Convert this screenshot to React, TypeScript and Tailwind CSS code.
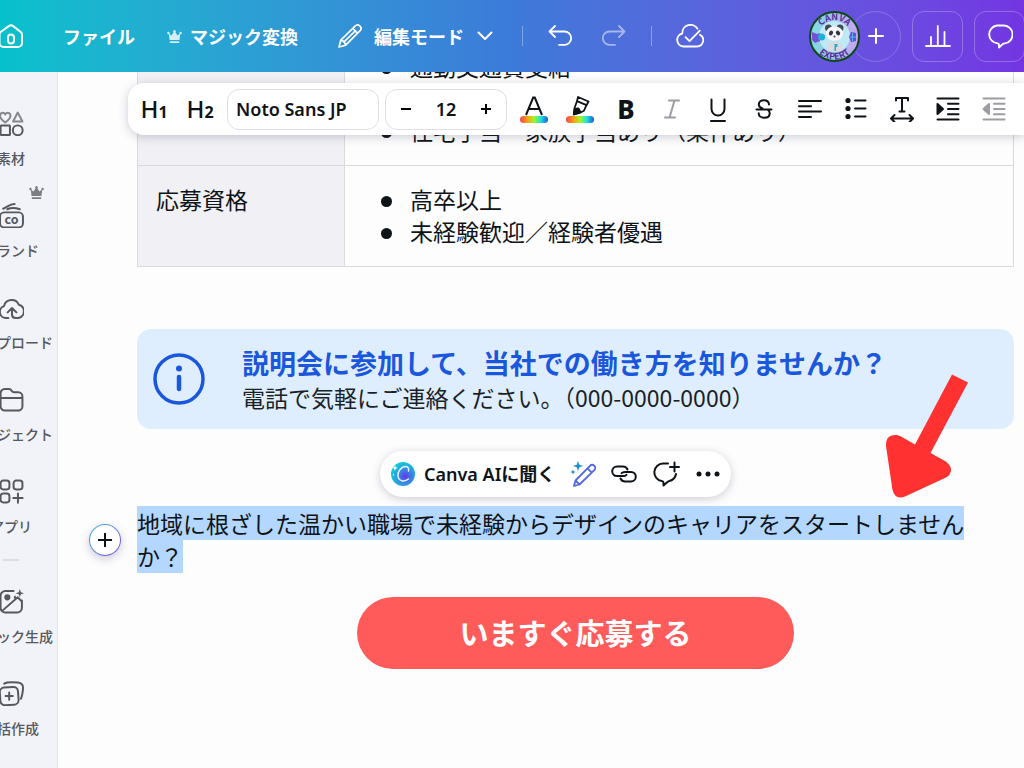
import type { ReactNode } from 'react';

type IconProps = { className?: string };

const Crown = ({ className }: IconProps) => (
  <svg viewBox="0 0 16 16" className={className} fill="currentColor" aria-hidden="true">
    <path d="M1.8 4.6l3 2.2L7.4 3h1.2l2.6 3.8 3-2.2-.9 7.2H2.7z" />
    <circle cx="1.5" cy="4.2" r="1.3" />
    <circle cx="8" cy="2.4" r="1.3" />
    <circle cx="14.5" cy="4.2" r="1.3" />
    <rect x="2.9" y="13" width="10.2" height="1.8" rx=".5" />
  </svg>
);

const Avatar = () => (
  <svg viewBox="0 0 51 51" className="h-[51px] w-[51px]" role="img" aria-label="Canva Expert">
    <defs>
      <linearGradient id="ring" x1="0" x2="1">
        <stop offset="0" stopColor="#7fdbe4" />
        <stop offset="1" stopColor="#c9a4ee" />
      </linearGradient>
      <path id="arcTop" d="M9 25.500a16.500 16.500 0 0 1 33 0" />
      <path id="arcBottom" d="M2.500 25.500a23 23 0 0 0 46 0" />
    </defs>
    <circle cx="25.5" cy="25.5" r="24.5" fill="url(#ring)" stroke="#0b4a17" strokeWidth="2" />
    <circle cx="25.5" cy="25.5" r="15.5" fill="#bfeaf5" />
    <path d="M3 21l5 2 3-1v8l-5 2-3-3z" fill="#7450d8" />
    <circle cx="12.5" cy="26" r="3.6" fill="#21aedb" />
    <path d="M42 21l5 1v8l-5 1-2-5z" fill="#6350d8" />
    <path d="M43.5 22v8M41 26h6" stroke="#52b9ef" />
    <text fontSize="9" fontWeight="700" fill="#56329c" textAnchor="middle">
      <textPath href="#arcTop" startOffset="50%">CANVA</textPath>
    </text>
    <text fontSize="9" fontWeight="700" fill="#56329c" textAnchor="middle">
      <textPath href="#arcBottom" startOffset="50%">EXPERT</textPath>
    </text>
    <path d="M18 40c-.5-7 2-10 7.500-10s8 3 7.500 10z" fill="#d9dbe0" />
    <circle cx="19.500" cy="17" r="3.500" fill="#454953" />
    <circle cx="31" cy="17" r="3.500" fill="#454953" />
    <ellipse cx="25.500" cy="22.500" rx="8.500" ry="7.300" fill="#f6f6f8" />
    <ellipse cx="22" cy="22" rx="2" ry="2.600" fill="#33373f" transform="rotate(25 22 22)" />
    <ellipse cx="29" cy="22" rx="2" ry="2.600" fill="#33373f" transform="rotate(-25 29 22)" />
    <circle cx="25.500" cy="25.500" r="1" fill="#33373f" />
    <path d="M25.500 33h3v3h-1.500v4h-1.500z" fill="#19b3c4" />
  </svg>
);

const Header = () => (
  <header className="relative z-20 flex h-[72px] shrink-0 items-center bg-linear-to-r from-[#05c1cc] via-[#3c7ad9] to-[#7335e2] text-lg font-bold text-white">
    <button aria-label="ホーム" className="w-[23px] shrink-0">
      <svg viewBox="0 0 23 24" className="h-6 w-[23px]" fill="none" stroke="currentColor" strokeWidth="2" strokeLinejoin="round">
        <path d="M-.5 10.500c0-1.200.5-2 1.500-2.800l7.800-5.600c1.400-1 3-1 4.400 0L20.800 8c.9.700 1.200 1.500 1.200 2.600V19a4 4 0 0 1-4 4H3.500a4 4 0 0 1-4-4z" />
        <rect x="8" y="10.500" width="6" height="9" rx="3" />
      </svg>
    </button>
    <button className="ml-10 shrink-0">ファイル</button>
    <button className="ml-8 flex shrink-0 items-center gap-2">
      <Crown className="h-[15px] w-[15px] opacity-80" />
      マジック変換
    </button>
    <button className="ml-10 flex shrink-0 items-center gap-3">
      <svg viewBox="0 0 24 24" className="h-6 w-6" fill="none" stroke="currentColor" strokeWidth="1.700" strokeLinejoin="round">
        <path d="M1 23l1.800-6.800L17.300 1.900a3.400 3.400 0 0 1 4.800 4.800L7.700 21.200z" />
        <path d="M14.800 4.500l4.800 4.800M2.800 16.200c2.200.4 4.300 2.500 4.900 5M18 6.200L5.300 18.700" />
      </svg>
      編集モード
      <svg viewBox="0 0 18 18" className="h-[18px] w-[18px]" fill="none" stroke="currentColor" strokeWidth="2" strokeLinecap="round" strokeLinejoin="round">
        <path d="M2.500 5.500l6.500 6.500 6.500-6.500" />
      </svg>
    </button>
    <span className="ml-7 h-5 w-px bg-white/35" />
    <button aria-label="元に戻す" className="ml-6 shrink-0">
      <svg viewBox="0 0 26 24" className="h-6 w-[26px]" fill="none" stroke="currentColor" strokeWidth="1.800" strokeLinecap="round" strokeLinejoin="round">
        <path d="M8 2L2.500 7.500 8 13M3 7.500h14.500a6.600 6.600 0 0 1 0 13.300H12" />
      </svg>
    </button>
    <button aria-label="やり直す" className="ml-7 shrink-0 opacity-50">
      <svg viewBox="0 0 26 24" className="h-6 w-[26px]" fill="none" stroke="currentColor" strokeWidth="1.800" strokeLinecap="round" strokeLinejoin="round">
        <path d="M18 2l5.500 5.500L18 13M23 7.500H8.500a6.600 6.600 0 0 0 0 13.300H14" />
      </svg>
    </button>
    <span className="ml-6 h-5 w-px bg-white/35" />
    <button aria-label="保存済み" className="ml-6 shrink-0">
      <svg viewBox="0 0 28 24" className="h-6 w-7" fill="none" stroke="currentColor" strokeWidth="1.800" strokeLinecap="round" strokeLinejoin="round">
        <path d="M21.500 4.800A8.200 8.200 0 0 0 6.300 9.500a6.600 6.600 0 0 0 .9 13h13.600a6.300 6.300 0 0 0 3.200-11.800" />
        <path d="M9.500 13.200l4 4L23.800 6.600" />
      </svg>
    </button>

    <div className="-mr-px ml-auto flex shrink-0 items-center gap-[11px]">
      <div className="flex">
        <div className="z-10">
          <Avatar />
        </div>
        <button aria-label="メンバーを追加" className="-ml-[10px] flex h-[51px] w-[51px] items-center justify-center rounded-full border border-white/20">
          <svg viewBox="0 0 16 16" className="h-4 w-4" stroke="currentColor" strokeWidth="2" strokeLinecap="round">
            <path d="M8 1v14M1 8h14" />
          </svg>
        </button>
      </div>
      <button aria-label="分析" className="flex h-[51px] w-[51px] items-center justify-center rounded-xl border border-white/25">
        <svg viewBox="0 0 26 24" className="h-6 w-[26px]" fill="none" stroke="currentColor" strokeWidth="1.800" strokeLinecap="round">
          <path d="M1 22h24M6 21.500V13M12.800 21.500V2M19.500 21.500V8" />
        </svg>
      </button>
      <button aria-label="コメント" className="flex h-[51px] w-[51px] items-center justify-center rounded-xl border border-white/25">
        <svg viewBox="0 0 26 26" className="h-[26px] w-[26px]" fill="none" stroke="currentColor" strokeWidth="1.900" strokeLinejoin="round">
          <path d="M10 2.500h6a9 9 0 0 1 1.800 17.900c-1.300.2-2.200.6-3 1.400l-2.800 2.700v-2.700c0-.9-.6-1.300-1.400-1.400A9 9 0 0 1 10 2.500z" />
        </svg>
      </button>
    </div>
  </header>
);

const sideItems: { label: string; icon: ReactNode; crown?: boolean }[] = [
  {
    label: '素材',
    icon: (
      <>
        <path d="M6 11C3 8.800 1 7 1 4.500 1 1.500 4.500.800 6 3.300 7.500.8 11 1.500 11 4.500 11 7 9 8.800 6 11zM18 1.500l4.500 8.500h-9z" opacity=".7" />
        <rect x="1.500" y="14" width="9" height="9" rx=".5" />
        <circle cx="18" cy="18.500" r="4.700" />
      </>
    ),
  },
  {
    label: 'ブランド',
    crown: true,
    icon: (
      <>
        <rect x="1" y="9" width="22" height="14.500" rx="4" />
        <path d="M4 5.500C8 4 10 1 15 1M8 6c4-2 8-1.500 12 0" />
        <text x="12" y="20" textAnchor="middle" fontSize="12" fontWeight="700" fill="currentColor" stroke="none">co</text>
      </>
    ),
  },
  {
    label: 'アップロード',
    icon: (
      <path d="M9 22H6.500A5.800 5.800 0 0 1 4.800 10.700 7.500 7.500 0 0 1 19 9.300 6.500 6.500 0 0 1 18.500 22H16c-2.500 0-3.500-1-3.500-3v-6.500m-4.200 4.200l4.200-4.200 4.200 4.200" />
    ),
  },
  {
    label: 'プロジェクト',
    icon: <path d="M1.500 6a4 4 0 0 1 4-4h4c1.300 0 2 .5 2.600 1.500.6 1 1.200 1.500 2.400 1.500h4a4 4 0 0 1 4 4v9.500a4 4 0 0 1-4 4h-13a4 4 0 0 1-4-4zM1.500 10.500h21" />,
  },
  {
    label: 'アプリ',
    icon: (
      <>
        <rect x="1.500" y="1.500" width="8.500" height="8.500" rx="2.500" />
        <rect x="14" y="1.500" width="8.500" height="8.500" rx="2.500" />
        <rect x="1.500" y="14" width="8.500" height="8.500" rx="2.500" />
        <path d="M18.200 13.800v9M13.700 18.300h9" />
      </>
    ),
  },
  {
    label: 'マジック生成',
    icon: (
      <>
        <path d="M14 2H6a4.500 4.500 0 0 0-4.500 4.500v11.500A4.500 4.500 0 0 0 6 22.500h11.500A4.500 4.500 0 0 0 22 18v-7M3 21L18 8l3.500 3.500" />
        <circle cx="8" cy="8" r="2" fill="currentColor" />
        <path d="M20 0l1 3 3 1-3 1-1 3-1-3-3-1 3-1zM15.500 6l1 2-1 2-1.500-2z" fill="currentColor" stroke="none" />
      </>
    ),
  },
  {
    label: '一括作成',
    icon: (
      <>
        <rect x="1" y="6" width="17.500" height="17" rx="4.500" transform="rotate(-4 10 14)" />
        <path d="M5 2.500C8 .8 12 1 18 1.500c4 .3 5.300 2.300 5 6-.3 4-.8 7-2 9.500M9.800 11v7M6.300 14.500h7" />
      </>
    ),
  },
];

const Sidebar = () => (
  <nav className="w-[58px] shrink-0 overflow-hidden border-r border-[#e3e4e9] bg-[#f2f3f8] pt-[39px] text-[#55585e]">
    {sideItems.map((item, i) => (
      <div key={item.label} className="-ml-9 w-[94px]">
        {i === 5 && <div className="mx-auto -mt-3 mb-7 h-[2px] w-4 bg-[#dcdde2]" />}
        <a href="#" className="relative flex h-[92px] flex-col items-center gap-3">
          <svg viewBox="0 0 24 24" className="h-[25px] w-[25px]" fill="none" stroke="currentColor" strokeWidth="1.900" strokeLinecap="round" strokeLinejoin="round">
            {item.icon}
          </svg>
          <span className="text-sm leading-5 font-medium whitespace-nowrap">{item.label}</span>
          {item.crown && <Crown className="absolute -top-[18px] right-[14px] h-[15px] w-[15px] opacity-75" />}
        </a>
      </div>
    ))}
  </nav>
);

const ToolButton = ({ label, dim, children }: { label: string; dim?: boolean; children: ReactNode }) => (
  <button aria-label={label} className={`flex h-10 w-[46px] shrink-0 items-center justify-center ${dim ? 'text-[#9b9da2]' : 'text-[#0e1318]'}`}>
    {children}
  </button>
);

const ToolIcon = ({ children }: { children: ReactNode }) => (
  <svg viewBox="0 0 26 26" className="h-[26px] w-[26px]" fill="none" stroke="currentColor" strokeWidth="2" strokeLinecap="round" strokeLinejoin="round">
    {children}
  </svg>
);

const RainbowBar = () => (
  <span className="h-[7px] w-7 rounded-full bg-[linear-gradient(90deg,#fb3f4c,#fb9a1c_25%,#a5f51d_50%,#18e0e8_75%,#2351dd)]" />
);

const FormatBar = () => (
  <div className="absolute top-[11px] right-0 left-[70px] z-10 flex h-[52px] items-center overflow-hidden rounded-l-2xl bg-white pl-[3px] font-[Noto_Sans,Noto_Sans_CJK_JP,sans-serif] shadow-[0_2px_10px_rgba(60,64,90,0.25)]">
    <ToolButton label="見出し1">
      <span className="text-2xl font-medium">H<span className="text-base font-bold">1</span></span>
    </ToolButton>
    <ToolButton label="見出し2">
      <span className="text-2xl font-medium">H<span className="text-base font-bold">2</span></span>
    </ToolButton>
    <button className="ml-1 h-[41px] w-[152px] shrink-0 rounded-xl border border-[#dddfe4] pl-2 text-left text-lg font-semibold text-[#0e1318]">
      Noto Sans JP
    </button>
    <div className="mr-1 ml-[6px] flex h-[41px] w-[122px] shrink-0 items-center rounded-xl border border-[#dddfe4]">
      <button aria-label="小さく" className="flex w-10 justify-center">
        <svg viewBox="0 0 12 12" className="h-3 w-3" stroke="currentColor" strokeWidth="2"><path d="M1 6h10" /></svg>
      </button>
      <input aria-label="フォントサイズ" defaultValue="12" className="w-10 text-center text-lg font-semibold text-[#0e1318]" />
      <button aria-label="大きく" className="flex w-10 justify-center">
        <svg viewBox="0 0 12 12" className="h-3 w-3" stroke="currentColor" strokeWidth="2"><path d="M1 6h10M6 1v10" /></svg>
      </button>
    </div>
    <ToolButton label="テキストの色">
      <span className="flex flex-col items-center">
        <svg viewBox="0 0 20 20" className="h-5 w-5" fill="none" stroke="currentColor" strokeWidth="2"><path d="M2 19L9.200 1.500h1.600L18 19M4.500 13h11" /></svg>
        <RainbowBar />
      </span>
    </ToolButton>
    <ToolButton label="ハイライト">
      <span className="flex flex-col items-center">
        <svg viewBox="0 0 20 20" className="h-5 w-5" fill="none" stroke="currentColor" strokeWidth="1.800" strokeLinejoin="round">
          <path d="M8 1L18.500 5.500l-2 3.700L7 5.200zM7 5.200L4.500 12l-.8 6.500L9.500 17l4.500-2.300 2.500-5.500" />
          <path d="M4.800 13l3.700-.5 2 3.500-1.500 1-5 1.300z" fill="currentColor" />
        </svg>
        <RainbowBar />
      </span>
    </ToolButton>
    <ToolButton label="太字"><span className="text-[26px] font-extrabold">B</span></ToolButton>
    <ToolButton label="斜体" dim>
      <ToolIcon><path d="M10 4.500h10M6 21.500h10M15.500 4.500l-5 17" /></ToolIcon>
    </ToolButton>
    <ToolButton label="下線">
      <ToolIcon><path d="M6.500 3.500v9.500a6.500 6.500 0 0 0 13 0V3.500M6 25h14" /></ToolIcon>
    </ToolButton>
    <ToolButton label="取り消し線">
      <ToolIcon><path d="M18 8.500c0-2.600-2-4.300-5-4.300s-5.200 1.700-5.200 4.300c0 2.200 1.700 3.300 3.700 4M5.500 13.500h15M17 14c1.200.8 1.700 1.900 1.700 3.300 0 2.800-2.300 4.500-5.500 4.500s-5.500-1.800-5.500-4.600" /></ToolIcon>
    </ToolButton>
    <ToolButton label="左揃え">
      <ToolIcon><path d="M2 5h22M2 10.300h12M2 15.600h22M2 21h12" /></ToolIcon>
    </ToolButton>
    <ToolButton label="箇条書き">
      <ToolIcon>
        <g fill="currentColor" stroke="none">
          <circle cx="5" cy="4.500" r="2.600" />
          <circle cx="5" cy="12.500" r="2.600" />
          <circle cx="5" cy="20.500" r="2.600" />
        </g>
        <path d="M12 4.500h10.500M12 12.500h10.500M12 20.500h10.500" />
      </ToolIcon>
    </ToolButton>
    <ToolButton label="文字間隔">
      <ToolIcon><path d="M7 4.500V2h12v2.500M13 2v13M10.500 15.500h5M2.500 22.500h21M5.500 19l-3.500 3.500L5.500 26M20.500 19l3.500 3.500-3.500 3.500" /></ToolIcon>
    </ToolButton>
    <ToolButton label="インデント">
      <ToolIcon>
        <path d="M2.500 2.500h21M13 7.700h10.500M13 13h10.500M13 18.200h10.500M2.500 23.500h21" />
        <path d="M2.500 8v10l5.500-5z" fill="currentColor" />
      </ToolIcon>
    </ToolButton>
    <ToolButton label="インデント解除" dim>
      <ToolIcon>
        <path d="M2.500 2.500h21M13 7.700h10.500M13 13h10.500M13 18.200h10.500M2.500 23.500h21" />
        <path d="M8 8v10l-5.500-5z" fill="currentColor" />
      </ToolIcon>
    </ToolButton>
  </div>
);

const Bullet = ({ children }: { children: ReactNode }) => (
  <li className="flex items-center gap-[18px] before:mt-1 before:h-[11px] before:w-[11px] before:shrink-0 before:rounded-full before:bg-[#0e1318]">
    {children}
  </li>
);

const JobTable = () => (
  <table className="-mt-10 w-full table-fixed border-collapse text-[23px] leading-8 text-[#0e1318]">
    <tbody>
      <tr>
        <th className="w-[207px] border border-[#d9dade] bg-[#f0f0f5]" aria-label="福利厚生" />
        <td className="border border-[#d9dade] px-9 pt-[17px] pb-[19px]">
          <ul className="flex flex-col gap-8">
            <Bullet>通勤交通費支給</Bullet>
            <Bullet>住宅手当・家族手当あり（条件あり）</Bullet>
          </ul>
        </td>
      </tr>
      <tr>
        <th className="border border-[#d9dade] bg-[#f0f0f5] px-[18px] pt-[17px] pb-[19px] text-left align-top font-normal">応募資格</th>
        <td className="border border-[#d9dade] px-9 pt-[17px] pb-[19px]">
          <ul>
            <Bullet>高卒以上</Bullet>
            <Bullet>未経験歓迎／経験者優遇</Bullet>
          </ul>
        </td>
      </tr>
    </tbody>
  </table>
);

const AskBar = () => (
  <div className="absolute -top-14 left-[243px] flex h-[46px] w-[351px] items-center rounded-full bg-white pl-[10px] text-[#0e1318] shadow-[0_2px_8px_rgba(60,64,90,0.25)]">
    <button className="flex shrink-0 items-center gap-2 font-[Noto_Sans,Noto_Sans_CJK_JP,sans-serif] text-lg font-semibold">
      <svg viewBox="0 0 26 26" className="h-[26px] w-[26px]">
        <defs>
          <radialGradient id="ai" cx=".6" cy=".6" r=".6">
            <stop offset="0" stopColor="#6a35e8" />
            <stop offset=".4" stopColor="#3d7ce8" />
            <stop offset="1" stopColor="#10cdd6" />
          </radialGradient>
        </defs>
        <circle cx="13" cy="13" r="12" fill="url(#ai)" />
        <path d="M18.500 10c.8-3-1-4.800-3.500-4.500-4 .5-7.500 5-7 9.500.5 5 6 6.500 10.500 3" fill="none" stroke="#e4f6ff" strokeWidth="1.500" strokeLinecap="round" />
        <path d="M5 4l.8 2.200L8 7l-2.200.8L5 10l-.8-2.200L2 7l2.200-.8zM3 12l.5 1.200 1.200.5-1.200.5L3 15.500z" fill="#fff" />
      </svg>
      Canva AIに聞く
    </button>
    <div className="ml-auto flex items-center gap-[15px] pr-[10px]">
      <button aria-label="マジック作文">
        <svg viewBox="0 0 26 26" className="h-[26px] w-[26px]" fill="none" stroke="#5068df" strokeWidth="1.800" strokeLinejoin="round">
          <path d="M4 25l1.500-5.500L20 4.800a3 3 0 0 1 4.300 4.300L9.500 23.500zM17.500 7.300l4.300 4.300M5.500 19.500l4 4" />
          <path d="M8 0l1.300 3.700L13 5 9.300 6.300 8 10 6.700 6.300 3 5l3.700-1.300zM3 8.500l.8 1.700 1.700.8-1.700.8L3 13.500l-.8-1.700L.5 11l1.700-.8z" fill="#1d91ce" stroke="none" />
        </svg>
      </button>
      <button aria-label="リンク">
        <svg viewBox="0 0 26 26" className="h-[26px] w-[26px]" fill="none" stroke="currentColor" strokeWidth="2" strokeLinecap="round">
          <path d="M16.500 8.500A5 5 0 0 0 12 5.500H6a4.800 4.800 0 0 0 0 9.600h6c1.500 0 2.600-.4 3.400-1.300" />
          <path d="M9.500 17.500A5 5 0 0 0 14 20.500h6a4.800 4.800 0 0 0 0-9.600h-6c-1.500 0-2.600.4-3.400 1.300" />
        </svg>
      </button>
      <button aria-label="コメントを追加">
        <svg viewBox="0 0 28 28" className="h-7 w-7" fill="none" stroke="currentColor" strokeWidth="2" strokeLinecap="round" strokeLinejoin="round">
          <path d="M16 3.500h-5A8.800 8.800 0 0 0 9.800 21c1 .2 1.700.7 1.700 1.700v2.800l3-2.800c.9-.9 1.600-1.500 3-1.700A8.800 8.800 0 0 0 24 14M22.500 2.500v9M18 7h9" />
        </svg>
      </button>
      <button aria-label="その他">
        <svg viewBox="0 0 26 26" className="h-[26px] w-[26px]" fill="currentColor">
          <circle cx="4" cy="13" r="2.500" />
          <circle cx="13" cy="13" r="2.500" />
          <circle cx="22" cy="13" r="2.500" />
        </svg>
      </button>
    </div>
  </div>
);

const Canvas = () => (
  <main className="relative min-w-0 flex-1 overflow-hidden bg-[#fdfdfe] pr-[10px] pl-[79px]">
    <FormatBar />
    <JobTable />

    <section className="mt-[62px] flex items-center rounded-[14px] bg-[#dfeeff] py-4 pl-4">
      <svg viewBox="0 0 52 52" className="h-[52px] w-[52px] shrink-0" fill="none" stroke="#1b57dd">
        <circle cx="26" cy="26" r="24" strokeWidth="3.500" />
        <path d="M26 24v12" strokeWidth="4.500" strokeLinecap="round" />
        <circle cx="26" cy="15.500" r="3" fill="#1b57dd" stroke="none" />
      </svg>
      <div className="ml-[37px] text-[#1b1f26]">
        <h2 className="text-[27px] leading-9 font-bold text-[#1b57dd]">説明会に参加して、当社での働き方を知りませんか？</h2>
        <p className="text-[23px] leading-8">電話で気軽にご連絡ください。（000-0000-0000）</p>
      </div>
    </section>

    <div className="relative mt-[78px]">
      <AskBar />
      <button aria-label="追加" className="absolute top-[17px] -left-12 h-8 w-8 rounded-full bg-linear-to-br from-[#19b5d8] to-[#7b3fe4] p-px shadow-[0_3px_8px_rgba(60,64,90,0.25)]">
        <span className="flex h-full items-center justify-center rounded-full bg-white">
          <svg viewBox="0 0 16 16" className="h-4 w-4" stroke="#0e1318" strokeWidth="2"><path d="M8 1v14M1 8h14" /></svg>
        </span>
      </button>
      <p className="text-[23px] leading-[33px] text-[#0e1318]">
        <span className="bg-[#b4d7ff]">
          地域に根ざした温かい職場で未経験からデザインのキャリアをスタートしません
          <br />
          か？
        </span>
      </p>
      <svg viewBox="880 370 92 132" className="absolute -top-[137px] right-[42px] h-[132px] w-[92px]" fill="#ff3131" aria-hidden="true">
        <path d="M952 374.500L968 382.500 930.500 453 945 461Q951 465 951 470 951 475 945 478L905 496.500Q895 500 892.500 490L886 446Q885.500 434 897 435L901 436.500 915 444.500z" />
      </svg>
    </div>

    <div className="mt-6 flex justify-center">
      <button className="h-[72px] w-[437px] rounded-full bg-[#ff5b5b] text-[29px] font-bold text-white">いますぐ応募する</button>
    </div>
  </main>
);

export default function App() {
  return (
    <div className="flex h-screen flex-col overflow-hidden font-[Noto_Sans_CJK_JP,Noto_Sans,sans-serif]">
      <Header />
      <div className="flex min-h-0 flex-1">
        <Sidebar />
        <Canvas />
      </div>
    </div>
  );
}
